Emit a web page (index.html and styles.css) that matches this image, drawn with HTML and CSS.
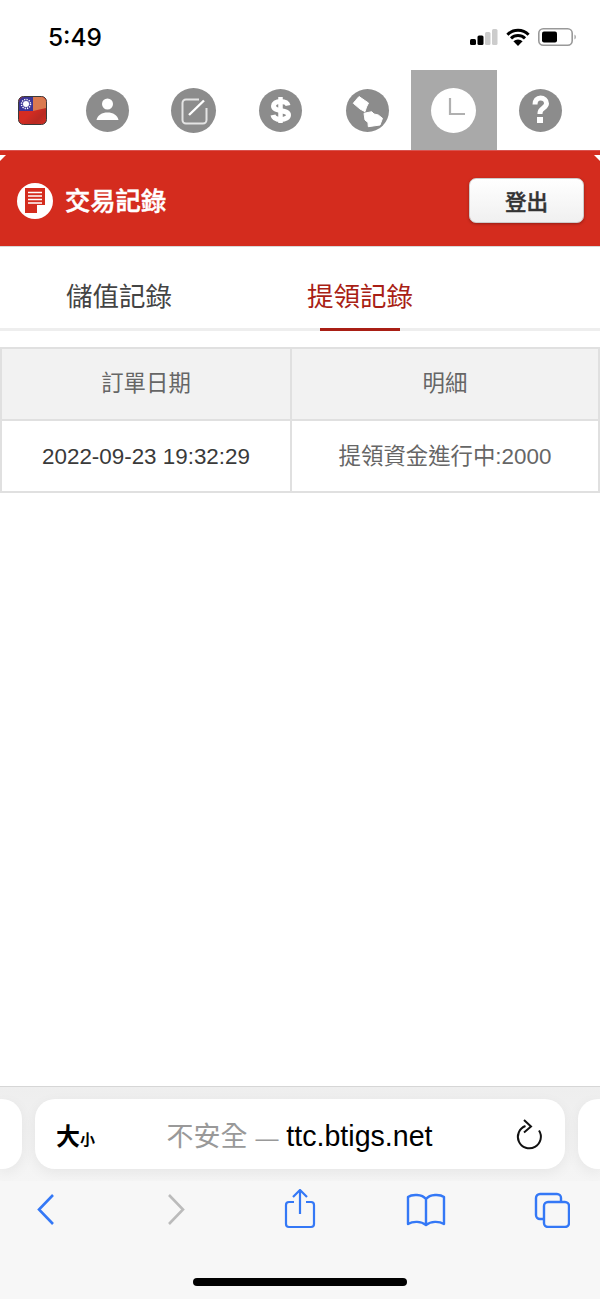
FILE: index.html
```html
<!DOCTYPE html>
<html lang="zh-Hant">
<head>
  <meta charset="UTF-8">
  <title>交易記錄</title>
  <link rel="stylesheet" href="styles.css">
</head>
<body>

  <div class="status-bar">
    <span class="status-time">5:49</span>
    <div class="status-icons">
      <svg width="28" height="16" viewBox="0 0 28 16">
        <rect x="0" y="10" width="6" height="6" rx="1.5" fill="#000"/>
        <rect x="7.500" y="6.500" width="6" height="9.500" rx="1.500" fill="#000"/>
        <rect x="15" y="3" width="5.500" height="13" rx="1.500" fill="#ccc"/>
        <rect x="22" y="0" width="5.500" height="16" rx="1.500" fill="#ccc"/>
      </svg>
      <svg width="24" height="18" viewBox="0 0 24 18">
        <path d="M1.400 6.700a15 15 0 0 1 21.200 0M5 10.400a10 10 0 0 1 14 0" fill="none" stroke="#000" stroke-width="3"/>
        <path d="M7.400 13.200a7 7 0 0 1 9.200 0L12 18z" fill="#000"/>
      </svg>
      <svg width="39" height="18" viewBox="0 0 39 18">
        <rect x="0.800" y="0.800" width="33.400" height="16.400" rx="4.500" fill="none" stroke="#999" stroke-width="1.600"/>
        <rect x="4" y="3.500" width="15" height="11" rx="2" fill="#000"/>
        <path d="M36.500 6.500a3 3 0 0 1 0 5z" fill="#999"/>
      </svg>
    </div>
  </div>

  <nav class="top-nav">
    <div class="flag">
      <svg width="29" height="29" viewBox="0 0 29 29">
        <defs>
          <linearGradient id="flag-red" x1="0" y1="0" x2="1" y2="1">
            <stop offset="0.500" stop-color="#d42c22"/>
            <stop offset="0.750" stop-color="#b92a22"/>
            <stop offset="1" stop-color="#d42c22"/>
          </linearGradient>
        </defs>
        <rect x="0.500" y="0.500" width="28" height="28" rx="5" fill="url(#flag-red)" stroke="#3a3a3a"/>
        <path d="M1 15V6a5 5 0 0 1 5-5h9v14z" fill="#3b3596"/>
        <path d="M15 1h8a5 5 0 0 1 5 5v6l-13 3z" fill="#da7a50"/>
        <circle cx="8" cy="8" r="3" fill="#fff"/>
        <circle cx="8" cy="8" r="4.500" fill="none" stroke="#fff" stroke-width="1.500" stroke-dasharray="1.200 1.150"/>
      </svg>
    </div>
    <div class="nav-item">
      <span class="nav-circle">
        <svg width="43" height="43" viewBox="0 0 43 43">
          <circle cx="21.500" cy="15" r="5.500" fill="#fff"/>
          <path d="M10.500 31c1-5 5.500-7.500 11-7.500s10 2.500 11 7.500z" fill="#fff"/>
        </svg>
      </span>
    </div>
    <div class="nav-item">
      <span class="nav-circle big">
        <svg width="45" height="45" viewBox="0 0 45 45">
          <path d="M28 11.500H15a3.500 3.500 0 0 0-3.500 3.500v17a3.500 3.500 0 0 0 3.500 3.500h17a3.500 3.500 0 0 0 3.500-3.500V20" fill="none" stroke="#e4e4e4" stroke-width="2"/>
          <path d="M18 27l15-14.500" fill="none" stroke="#fff" stroke-width="2.400"/>
        </svg>
      </span>
    </div>
    <div class="nav-item">
      <span class="nav-circle">
        <svg width="43" height="43" viewBox="0 0 43 43">
          <path d="M29 16.500c-.5-2.500-3-4-7.500-4s-7 2-7 4.500c0 6.500 15 3 15 9 0 2.500-3 4.500-7.500 4.500s-7.500-1.500-8-4.500" fill="none" stroke="#fff" stroke-width="5"/>
          <path d="M21.500 8v26" stroke="#fff" stroke-width="4.500"/>
        </svg>
      </span>
    </div>
    <div class="nav-item">
      <span class="nav-circle">
        <svg width="43" height="43" viewBox="0 0 43 43">
          <path d="M13 7.500L22.500 14 20.500 18 19 22.700 14 20 7.300 14.300 9.500 11.500z" fill="#fff" stroke="#fff" stroke-width="1" stroke-linejoin="round"/>
          <path d="M18 24.300L25.700 22.700 28 25 32.300 26 36.500 29.300 34 36 22.300 37.700 22 33.500 19 31z" fill="#fff" stroke="#fff" stroke-width="1" stroke-linejoin="round"/>
        </svg>
      </span>
    </div>
    <div class="nav-item active">
      <span class="nav-circle big">
        <svg width="45" height="45" viewBox="0 0 45 45">
          <path d="M19 10v16h15" fill="none" stroke="#b0b0b0" stroke-width="2.200"/>
        </svg>
      </span>
    </div>
    <div class="nav-item">
      <span class="nav-circle">
        <svg width="43" height="43" viewBox="0 0 43 43">
          <path d="M16 15.500c0-4 2.200-6.500 5.500-6.500s6 2.500 6 5.500c0 4.500-6.500 4.500-6.500 9.500v1" fill="none" stroke="#fff" stroke-width="5"/>
          <rect x="18" y="28" width="6" height="6" fill="#fff"/>
        </svg>
      </span>
    </div>
  </nav>

  <header class="page-head">
    <div class="page-title">
      <span class="title-icon">
        <svg width="36" height="36" viewBox="0 0 36 36">
          <circle cx="18" cy="18" r="18" fill="#fff"/>
          <path d="M8 5h20v17h-8v8H8z" fill="#d42c1e"/>
          <path d="M11 9.500h14M11 13h14M11 16.500h14M11 20h14" stroke="#fff" stroke-width="1.500"/>
        </svg>
      </span>
      <h1>交易記錄</h1>
    </div>
    <button class="logout">登出</button>
  </header>

  <div class="tabs">
    <div class="tab">儲值記錄</div>
    <div class="tab current">提領記錄</div>
  </div>

  <table class="records">
    <tr>
      <th>訂單日期</th>
      <th>明細</th>
    </tr>
    <tr>
      <td class="date">2022-09-23 19:32:29</td>
      <td>提領資金進行中:2000</td>
    </tr>
  </table>

  <div class="spacer"></div>

  <div class="safari">
    <div class="url-row">
      <div class="pill side"></div>
      <div class="pill url">
        <span class="text-size">大<small>小</small></span>
        <span class="address"><span class="insecure">不安全</span> <span class="dash">—</span> ttc.btigs.net</span>
        <svg class="reload" width="28" height="32" viewBox="0 0 28 32">
          <path d="M24 11.500A11.500 11.500 0 1 1 10.500 7" fill="none" stroke="#111" stroke-width="2"/>
          <path d="M9 1l7 6.500-7 6" fill="none" stroke="#111" stroke-width="2"/>
        </svg>
      </div>
      <div class="pill side"></div>
    </div>
    <div class="toolbar">
      <svg width="20" height="36" viewBox="0 0 20 36">
        <path d="M17 3L3 17.500 17 32" fill="none" stroke="#3478f6" stroke-width="2.600"/>
      </svg>
      <svg width="20" height="36" viewBox="0 0 20 36">
        <path d="M3 3l14 14.500L3 32" fill="none" stroke="#bbb" stroke-width="2.600"/>
      </svg>
      <svg width="32" height="42" viewBox="0 0 32 42">
        <path d="M10 13H5a3 3 0 0 0-3 3v19a3 3 0 0 0 3 3h22a3 3 0 0 0 3-3V16a3 3 0 0 0-3-3h-5" fill="none" stroke="#3478f6" stroke-width="2.200"/>
        <path d="M16 25V2M9 8l7-7 7 7" fill="none" stroke="#3478f6" stroke-width="2.200"/>
      </svg>
      <svg width="40" height="34" viewBox="0 0 40 34">
        <path d="M20 6C16 1 6 1 2 4v27c5-3 13-3 18 1 5-4 13-4 18-1V4c-4-3-14-3-18 2zM20 6v26" fill="none" stroke="#3478f6" stroke-width="2.400" stroke-linejoin="round"/>
      </svg>
      <svg width="36" height="36" viewBox="0 0 36 36">
        <rect x="10" y="10" width="25" height="25" rx="4" fill="none" stroke="#3478f6" stroke-width="2.400"/>
        <path d="M10 27H6a4 4 0 0 1-4-4V6a4 4 0 0 1 4-4h17a4 4 0 0 1 4 4v4" fill="none" stroke="#3478f6" stroke-width="2.400"/>
      </svg>
    </div>
    <div class="home-bar"></div>
  </div>

</body>
</html>
```

FILE: styles.css
```css
* {
  box-sizing: border-box;
}

body {
  margin: 0;
  width: 600px;
  height: 1299px;
  display: flex;
  flex-direction: column;
  overflow: hidden;
  background-color: #ffffff;
  font-family: "Liberation Sans", "Noto Sans CJK TC", sans-serif;
}

/* status bar */
.status-bar {
  height: 70px;
  flex-shrink: 0;
  display: flex;
  justify-content: space-between;
  align-items: center;
  padding: 4px 23px 0 48px;
}

.status-time {
  font-family: Inter, sans-serif;
  font-size: 24.4px;
  font-weight: 500;
  color: #000;
}

.status-icons {
  display: flex;
  align-items: center;
  gap: 8px;
}

/* top icons */
.top-nav {
  height: 80px;
  flex-shrink: 0;
  display: grid;
  grid-template-columns: 64px repeat(6, 86.67px);
}

.flag {
  display: flex;
  align-items: center;
  padding-left: 18px;
}

.nav-item {
  display: flex;
  align-items: center;
  justify-content: center;
}

.nav-item.active {
  background-color: #a9a9a9;
}

.nav-circle {
  width: 43px;
  height: 43px;
  border-radius: 50%;
  background-color: #8c8c8c;
  display: block;
}

.nav-circle.big {
  width: 45px;
  height: 45px;
}

.nav-item.active .nav-circle {
  background-color: #ffffff;
}

/* red heading */
.page-head {
  position: relative;
  height: 97px;
  flex-shrink: 0;
  display: flex;
  justify-content: space-between;
  align-items: center;
  padding: 4px 16px 0 17px;
  background-color: #d42c1e;
  border-top: 1px solid #d9534f;
  border-bottom: 1px solid #d8d8d8;
}

.page-head::before,
.page-head::after {
  content: "";
  position: absolute;
  top: 4px;
  width: 6px;
  height: 6px;
  background-color: #ffffff;
}

.page-head::before {
  left: 0;
  clip-path: polygon(0 0, 100% 0, 0 100%);
}

.page-head::after {
  right: 0;
  clip-path: polygon(0 0, 100% 0, 100% 100%);
}

.page-title {
  display: flex;
  align-items: center;
  gap: 12px;
}

.title-icon {
  height: 36px;
}

.page-title h1 {
  margin: 0;
  padding-bottom: 3px;
  font-size: 25.3px;
  font-weight: 500;
  color: #ffffff;
  -webkit-text-stroke: 0.5px #ffffff;
}

.logout {
  width: 115px;
  height: 45px;
  border: 1px solid #cccccc;
  border-radius: 7px;
  background: linear-gradient(#ffffff, #f0f0f0);
  box-shadow: 0 1px 3px rgba(0, 0, 0, 0.3);
  font-family: inherit;
  font-size: 21.500px;
  font-weight: 500;
  color: #333;
  -webkit-text-stroke: 0.4px #333;
}

/* tabs */
.tabs {
  height: 84px;
  flex-shrink: 0;
  display: grid;
  grid-template-columns: 238px 244px;
  border-bottom: 3px solid #eeeeee;
}

.tab {
  display: flex;
  justify-content: center;
  align-items: center;
  padding-top: 13px;
  font-size: 26.500px;
  color: #444444;
}

.tab.current {
  position: relative;
  color: #a91f15;
}

.tab.current::after {
  content: "";
  position: absolute;
  left: 82px;
  bottom: -3px;
  width: 80px;
  height: 3px;
  background-color: #a91f15;
}

/* table */
.records {
  width: 600px;
  margin-top: 16px;
  flex-shrink: 0;
  border-collapse: collapse;
  table-layout: fixed;
  border: 2px solid #e0e0e0;
}

.records th,
.records td {
  height: 72px;
  padding: 2px 0 0;
  border: 2px solid #e0e0e0;
  text-align: center;
  font-size: 22.400px;
  font-weight: 400;
  line-height: 26px;
  color: #666666;
}

.records th {
  padding: 0;
  background-color: #f2f2f2;
}

.records th:first-child {
  width: 290px;
}

.records .date {
  color: #3a3a3a;
}

.spacer {
  flex: 1;
}

/* safari chrome */
.safari {
  height: 213px;
  flex-shrink: 0;
  display: flex;
  flex-direction: column;
  border-top: 1px solid #d6d6d6;
  background-color: #f7f7f7;
}

.url-row {
  display: flex;
  justify-content: center;
  gap: 13px;
  padding: 12px 0;
  overflow: hidden;
  background: linear-gradient(#eeeeee, #f5f5f5);
}

.pill {
  height: 70px;
  flex-shrink: 0;
  border-radius: 20px;
  background-color: #ffffff;
  box-shadow: 0 4px 14px rgba(0, 0, 0, 0.06);
}

.pill.side {
  width: 22px;
}

.pill.side:first-child {
  border-radius: 0 20px 20px 0;
}

.pill.side:last-child {
  border-radius: 20px 0 0 20px;
}

.pill.url {
  width: 530px;
  display: grid;
  grid-template-columns: 60px 1fr 60px;
  align-items: center;
  padding: 0 22px 0 21px;
}

.text-size {
  font-family: "Noto Sans CJK TC", sans-serif;
  font-size: 24px;
  font-weight: 700;
  color: #000;
}

.text-size small {
  font-size: 15px;
}

.address {
  text-align: center;
  font-size: 28.600px;
  color: #000;
  white-space: nowrap;
}

.insecure {
  font-size: 27px;
  color: #999999;
}

.dash {
  font-size: 23px;
  color: #999999;
}

.reload {
  justify-self: end;
  margin-top: 2px;
}

.toolbar {
  display: grid;
  grid-template-columns: 92px 168px 80px 172px 80px;
  justify-items: center;
  align-items: center;
  height: 42px;
  margin-top: 7.500px;
}

.home-bar {
  width: 214px;
  height: 8px;
  margin: 47.500px auto 0;
  border-radius: 4px;
  background-color: #000;
}
```
